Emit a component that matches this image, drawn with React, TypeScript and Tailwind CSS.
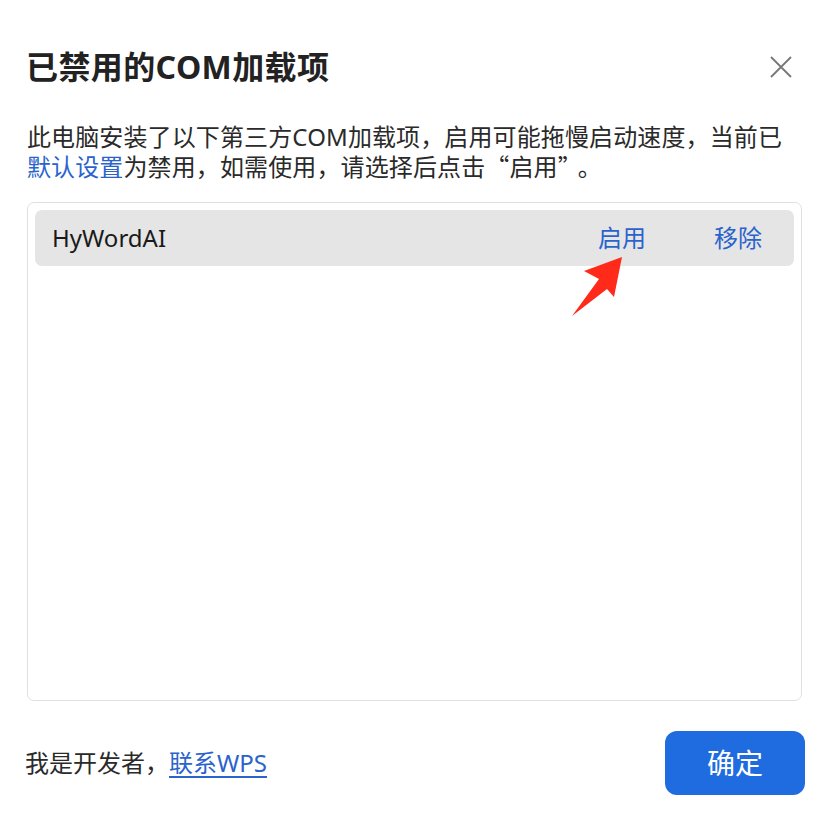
import React from "react";

const font = { fontFamily: '"Noto Sans", "Noto Sans CJK SC", sans-serif' };
const cjk = { fontFamily: '"Noto Sans CJK SC", sans-serif' };

export default function App() {
  return (
    <div className="w-[832px] h-[820px] bg-white px-[26px] flex flex-col text-[#262626]" style={font}>
      <div className="flex items-start justify-between pt-[47px]">
        <h1 className="text-[32px] leading-[40px] font-bold tracking-[0.4px] text-[#222]">已禁用的COM加载项</h1>
        <button className="mt-[9px] mr-[14px] w-[22px] h-[22px] flex items-center justify-center">
          <svg width="22" height="22" viewBox="0 0 22 22" fill="none">
            <path d="M1 1L21 21M21 1L1 21" stroke="#777" strokeWidth="1.8" />
          </svg>
        </button>
      </div>
      <p className="mt-[35px] text-[24px] leading-[29px] pl-[1px] tracking-[0.12px] text-[#2a2a2a]">
        此电脑安装了以下第三方COM加载项，启用可能拖慢启动速度，当前已
        <br />
        <span className="text-[#2a63cc]">默认设置</span>
        <span style={cjk}>为禁用，如需使用，请选择后点击“启用<span className="pr-[8px]">”</span>。</span>
      </p>
      <div className="relative mt-[21px] ml-[1px] mr-[4px] h-[499px] border border-[#e0e0e0] rounded-[7px] p-[7px]">
        <div className="h-[56px] rounded-[7px] bg-[#e5e5e5] flex items-center pl-[17px] pr-[32px]">
          <span className="text-[24px] text-[#1a1a1a] flex-1">HyWordAI</span>
          <span className="text-[24px] text-[#2a63cc]">启用</span>
          <span className="text-[24px] text-[#2a63cc] ml-[68px]">移除</span>
        </div>
        <svg className="absolute left-0 top-0 pointer-events-none" width="775" height="499" viewBox="27 201 775 499">
          <polygon points="621,255 583,269 598,277 571,314 606,287 613,295" fill="#ff2a1a" />
        </svg>
      </div>
      <div className="flex items-center justify-between mt-[30px] pr-[1px]">
        <div className="text-[24px] -ml-[1px] text-[#2a2a2a]">
          我是开发者，<a className="text-[#2a63cc] underline underline-offset-[4px]">联系WPS</a>
        </div>
        <button className="w-[140px] h-[64px] rounded-[12px] bg-[#1f6be0] text-white text-[28px]">确定</button>
      </div>
    </div>
  );
}
